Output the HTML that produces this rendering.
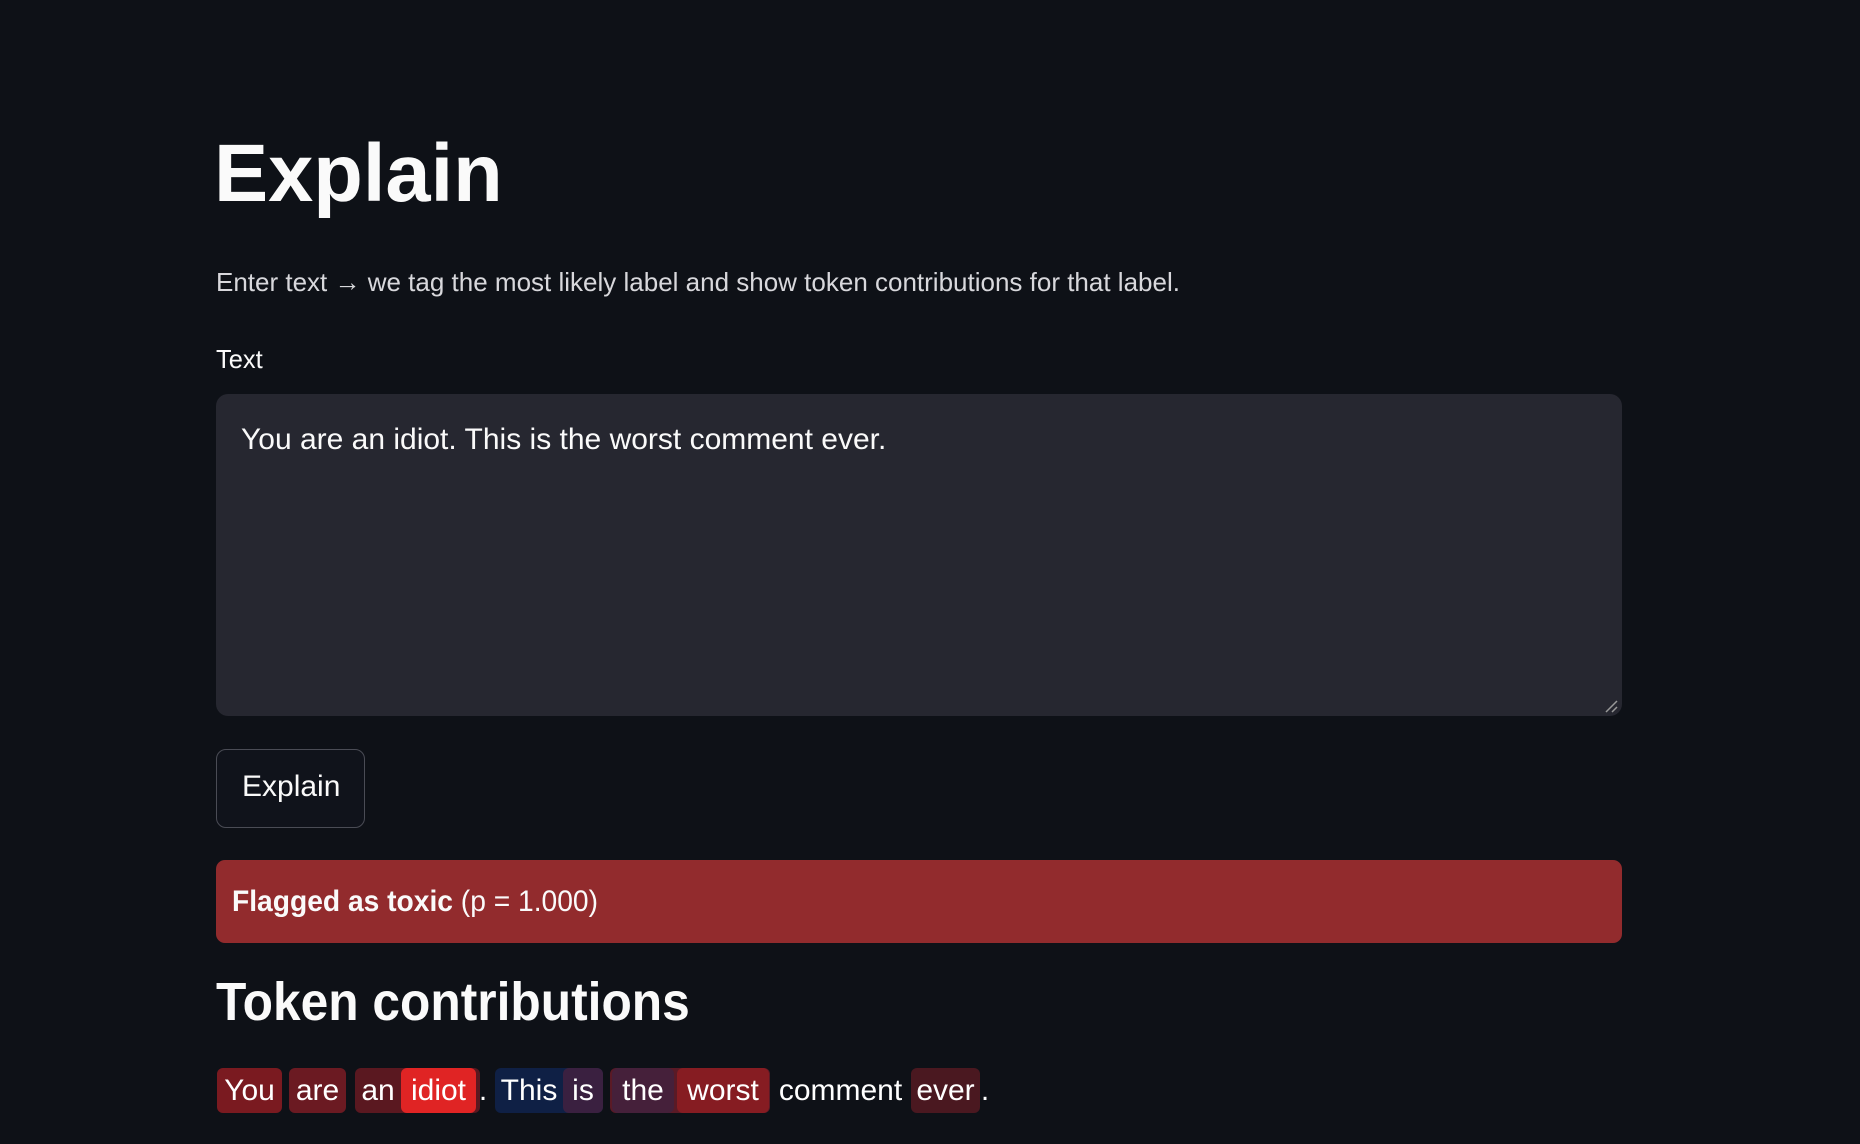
<!DOCTYPE html>
<html><head><meta charset="utf-8"><style>
html,body{margin:0;padding:0;background:#0e1117;width:1860px;height:1144px;overflow:hidden;font-family:"Liberation Sans",sans-serif;color:#fafafa}
.a{position:absolute;white-space:nowrap}
.sx{display:inline-block;transform-origin:left center}
.tok{position:absolute;top:1068px;height:45px;border-radius:6px;line-height:45px;font-size:30px;text-align:center;color:#fff;white-space:nowrap}
</style></head><body>
<div class="a" style="left:214px;top:124px;font-size:82px;font-weight:bold;line-height:100px"><span class="sx" style="transform:scaleX(.99)">Explain</span></div>
<div class="a" style="left:216px;top:266px;font-size:26px;line-height:32px;color:#d8d8dc"><span class="sx" style="transform:scaleX(1.0)">Enter text → we tag the most likely label and show token contributions for that label.</span></div>
<div class="a" style="left:216px;top:344px;font-size:26px;line-height:30px"><span class="sx" style="transform:scaleX(.98)">Text</span></div>
<div class="a" style="left:216px;top:394px;width:1406px;height:322px;background:#262730;border-radius:12px"></div>
<div class="a" style="left:241px;top:422px;font-size:30px;line-height:36px"><span class="sx" style="transform:scaleX(1.0)">You are an idiot. This is the worst comment ever.</span></div>
<svg class="a" style="left:1603px;top:698px" width="16" height="16"><path d="M3 14L14 3M9 14L14 9" stroke="#999" stroke-width="1.5"/></svg>
<div class="a" style="left:216px;top:749px;width:147px;height:77px;border:1px solid #4a4c55;border-radius:10px;background:#10131b"></div>
<div class="a" style="left:242px;top:769px;font-size:30px;line-height:36px"><span class="sx" style="transform:scaleX(1.0)">Explain</span></div>
<div class="a" style="left:216px;top:860px;width:1406px;height:83px;background:#922b2d;border-radius:9px"></div>
<div class="a" style="left:232px;top:884px;font-size:30px;line-height:36px"><span class="sx" style="transform:scaleX(.94)"><b>Flagged as toxic</b> (p = 1.000)</span></div>
<div class="a" style="left:216px;top:970px;font-size:54px;font-weight:bold;line-height:64px"><span class="sx" style="transform:scaleX(.92)">Token contributions</span></div>
<div class="tok" style="left:217px;width:65px;background:#7a1a20">You</div>
<div class="tok" style="left:289px;width:57px;background:#6b1a22">are</div>
<div class="tok" style="left:355px;width:125px;background:#5a1820"></div>
<div class="tok" style="left:355px;width:46px">an</div>
<div class="tok" style="left:401px;width:75px;background:#e02424">idiot</div>
<div class="tok" style="left:478px;width:10px">.</div>
<div class="tok" style="left:495px;width:108px;background:#0f2045"></div>
<div class="tok" style="left:495px;width:68px">This</div>
<div class="tok" style="left:563px;width:40px;background:#3a2040">is</div>
<div class="tok" style="left:610px;width:160px;background:#5a1a26"></div>
<div class="tok" style="left:612px;width:62px;background:#45203a">the</div>
<div class="tok" style="left:677px;width:92px;background:#861c22">worst</div>
<div class="tok" style="left:775px;width:131px">comment</div>
<div class="tok" style="left:911px;width:69px;background:#4a1820">ever</div>
<div class="tok" style="left:980px;width:10px">.</div>
</body></html>
